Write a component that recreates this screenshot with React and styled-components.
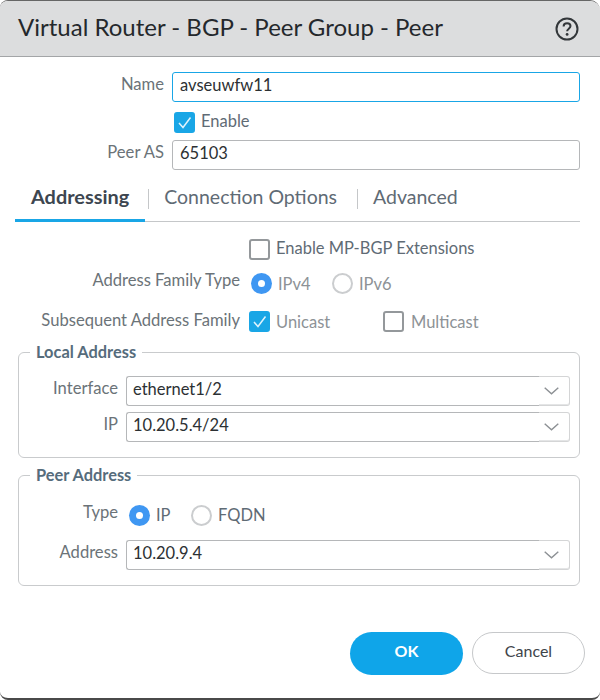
import React from "react"
import styled, { createGlobalStyle } from "styled-components"

const Global = createGlobalStyle`
  html, body { margin: 0; padding: 0; background: #fff; }
  body { font-family: Lato, "Open Sans", sans-serif; }
`

const Dialog = styled.div`
  box-sizing: border-box;
  width: 600px;
  height: 700px;
  display: flex;
  flex-direction: column;
  background: #fff;
  border-top: 1px solid #666;
  border-bottom: 2px solid #4a4a4a;
  border-radius: 8px 10px 8px 8px;
  overflow: hidden;
`
const Header = styled.div`
  box-sizing: border-box;
  height: 56px;
  flex: none;
  display: flex;
  align-items: center;
  justify-content: space-between;
  padding: 0 21px 0 18px;
  background: #dcddde;
  border-bottom: 1px solid #a3a5a7;
`
const Title = styled.h1`
  margin: 0;
  font-size: 24px;
  font-weight: 400;
  color: #24282c;
  position: relative;
  top: -2px;
`
const Body = styled.div`
  flex: 1;
  display: flex;
  flex-direction: column;
  padding: 15px 20px 0 18px;
`
const Row = styled.div`
  display: flex;
  align-items: center;
  height: ${p => p.$h || 30}px;
  margin-top: ${p => p.$mt || 0}px;
`
const Label = styled.label`
  width: ${p => p.$w}px;
  flex: none;
  padding-right: 8px;
  box-sizing: border-box;
  text-align: right;
  font-size: 16.6px;
  line-height: 18px;
  color: #6b7378;
  white-space: nowrap;
  position: relative;
  top: ${p => (p.$top === undefined ? -3 : p.$top)}px;
`
const TextBox = styled.div`
  box-sizing: border-box;
  flex: 1;
  height: 30px;
  display: flex;
  align-items: center;
  padding: 0 0 4px 7px;
  font-size: 16.5px;
  color: #2c3033;
  background: #fff;
  border: 1px solid ${p => (p.$focus ? "#19a6e6" : "#b5b7b9")};
  border-radius: 3px;
`
const Combo = styled.div`
  flex: 1;
  height: 30px;
  display: flex;
  box-sizing: border-box;
`
const ComboText = styled(TextBox)`
  padding-left: 6px;
  border-right: none;
  border-radius: 3px 0 0 3px;
`
const ComboArrow = styled.div`
  box-sizing: border-box;
  width: 31px;
  height: 30px;
  flex: none;
  display: flex;
  align-items: center;
  justify-content: center;
  padding-right: 5px;
  border: 1px solid #d4d5d6;
  border-left: none;
  border-radius: 0 3px 3px 0;
  box-shadow: inset 0 -1px 0 #e4e5e6;
`
const CheckBox = styled.span`
  box-sizing: border-box;
  width: 21px;
  height: 21px;
  flex: none;
  display: inline-flex;
  align-items: center;
  justify-content: center;
  border-radius: 3px;
  background: ${p => (p.$on ? "#19a6e6" : "#fff")};
  border: 2px solid ${p => (p.$on ? "#19a6e6" : "#94989b")};
`
const Radio = styled.span`
  box-sizing: border-box;
  width: 21px;
  height: 21px;
  flex: none;
  display: inline-flex;
  align-items: center;
  justify-content: center;
  border-radius: 50%;
  background: ${p => (p.$on ? "#3f97f2" : "#fff")};
  border: ${p => (p.$on ? "none" : "2px solid #cbcdcf")};
  &::after {
    content: "";
    display: ${p => (p.$on ? "block" : "none")};
    width: 7px;
    height: 7px;
    border-radius: 50%;
    background: #fff;
  }
`
const Option = styled.span`
  display: inline-flex;
  align-items: center;
  gap: ${p => p.$gap || 6}px;
  width: ${p => (p.$w ? `${p.$w}px` : "auto")};
  margin-left: ${p => p.$ml || 0}px;
  font-size: 16.5px;
  color: ${p => p.$color || "#8d9296"};
`
const OptionText = styled.span`
  position: relative;
  top: ${p => p.$top || 0}px;
`
const Tabs = styled.div`
  display: flex;
  align-items: center;
  height: 40px;
  margin: 11px 0 0 -3px;
  border-bottom: 1px solid #c5c7c9;
`
const Tab = styled.div`
  box-sizing: border-box;
  height: 41px;
  margin-bottom: -1px;
  padding: 0 ${p => p.$pr}px 8px ${p => p.$pl}px;
  display: flex;
  align-items: center;
  font-size: ${p => (p.$on ? 19.9 : 19.5)}px;
  font-weight: ${p => (p.$on ? 700 : 400)};
  color: ${p => (p.$on ? "#3d4650" : "#5f6b75")};
  border-bottom: 3px solid ${p => (p.$on ? "#19a6e6" : "transparent")};
`
const TabSep = styled.span`
  width: 1px;
  height: 20px;
  margin: 0 0 4px 3px;
  background: #c5c7c9;
`
const Group = styled.fieldset`
  box-sizing: border-box;
  height: ${p => p.$h}px;
  margin: ${p => p.$mt || 0}px 0 0;
  padding: 13px 9px 0 0;
  border: 1px solid #c9cbcd;
  border-radius: 6px;
  min-width: 0;
`
const GroupTitle = styled.legend`
  margin-left: 11px;
  padding: 0 6px;
  font-size: 16.4px;
  font-weight: 700;
  color: #566c7c;
  line-height: 20px;
`
const Footer = styled.div`
  display: flex;
  justify-content: flex-end;
  gap: 9px;
  margin: 46px -5px 0 0;
`
const Button = styled.button`
  box-sizing: border-box;
  width: 113px;
  height: ${p => (p.$primary ? 43 : 42)}px;
  border-radius: 22px;
  font-family: inherit;
  font-size: 16px;
  font-weight: ${p => (p.$primary ? 700 : 400)};
  padding: 0 0 6px;
  color: ${p => (p.$primary ? "#fff" : "#3e444a")};
  background: ${p => (p.$primary ? "#0fa5e9" : "#fff")};
  border: ${p => (p.$primary ? "none" : "1px solid #c6c8ca")};
`

const Tick = () => (
  <svg width="17" height="17" viewBox="0 0 17 17" fill="none">
    <path d="M3 9l4 4.5L14.5 3.5" stroke="#dff3fc" strokeWidth="1.5" />
  </svg>
)
const Chevron = () => (
  <svg width="15" height="8" viewBox="0 0 15 8" fill="none">
    <path d="M.7.7l6.8 6 6.8-6" stroke="#8c9094" strokeWidth="1.4" />
  </svg>
)
const HelpIcon = () => (
  <svg width="24" height="24" viewBox="0 0 24 24" fill="none">
    <circle cx="12" cy="12" r="10.5" stroke="#33373a" strokeWidth="2" />
    <path d="M8.6 9.4c0-2 1.5-3.2 3.5-3.2s3.4 1.2 3.4 2.9c0 2.6-3.4 2.6-3.4 5.2" stroke="#33373a" strokeWidth="2" />
    <circle cx="12.1" cy="17.4" r="1.4" fill="#33373a" />
  </svg>
)

const ComboRow = ({ label, value, mt }) => (
  <Row $mt={mt}>
    <Label $w={107}>{label}</Label>
    <Combo>
      <ComboText>{value}</ComboText>
      <ComboArrow><Chevron /></ComboArrow>
    </Combo>
  </Row>
)

export default function App() {
  return (
    <Dialog>
      <Global />
      <Header>
        <Title>Virtual Router - BGP - Peer Group - Peer</Title>
        <HelpIcon />
      </Header>
      <Body>
        <Row>
          <Label $w={154}>Name</Label>
          <TextBox $focus>avseuwfw11</TextBox>
        </Row>
        <Row $mt={9} $h={22}>
          <Option $ml={156} $color="#5f6b75"><CheckBox $on><Tick /></CheckBox><OptionText $top={-1}>Enable</OptionText></Option>
        </Row>
        <Row $mt={7}>
          <Label $w={154}>Peer AS</Label>
          <TextBox>65103</TextBox>
        </Row>
        <Tabs>
          <Tab $on $pl={16} $pr={16}>Addressing</Tab>
          <TabSep />
          <Tab $pl={15} $pr={17}>Connection Options</Tab>
          <TabSep />
          <Tab $pl={15} $pr={16}>Advanced</Tab>
        </Tabs>
        <Row $mt={17} $h={21}>
          <Option $ml={231} $color="#5f6b75"><CheckBox /><OptionText $top={-2}>Enable MP-BGP Extensions</OptionText></Option>
        </Row>
        <Row $mt={13} $h={21}>
          <Label $w={230} $top={-4}>Address Family Type</Label>
          <Option $ml={3} $w={81}><Radio $on />IPv4</Option>
          <Option><Radio />IPv6</Option>
        </Row>
        <Row $mt={17} $h={21}>
          <Label $w={230} $top={-2}>Subsequent Address Family</Label>
          <Option $ml={1} $w={134}><CheckBox $on><Tick /></CheckBox>Unicast</Option>
          <Option $gap={7}><CheckBox />Multicast</Option>
        </Row>
        <Group $h={116} $mt={10}>
          <GroupTitle>Local Address</GroupTitle>
          <ComboRow label="Interface" value="ethernet1/2" mt={1} />
          <ComboRow label="IP" value="10.20.5.4/24" mt={6} />
        </Group>
        <Group $h={121} $mt={7}>
          <GroupTitle>Peer Address</GroupTitle>
          <Row $h={24} $mt={5}>
            <Label $w={107}>Type</Label>
            <Option $ml={3} $w={62} $color="#5f6b75"><Radio $on />IP</Option>
            <Option $color="#5f6b75"><Radio />FQDN</Option>
          </Row>
          <ComboRow label="Address" value="10.20.9.4" mt={13} />
        </Group>
        <Footer>
          <Button $primary>OK</Button>
          <Button>Cancel</Button>
        </Footer>
      </Body>
    </Dialog>
  )
}
